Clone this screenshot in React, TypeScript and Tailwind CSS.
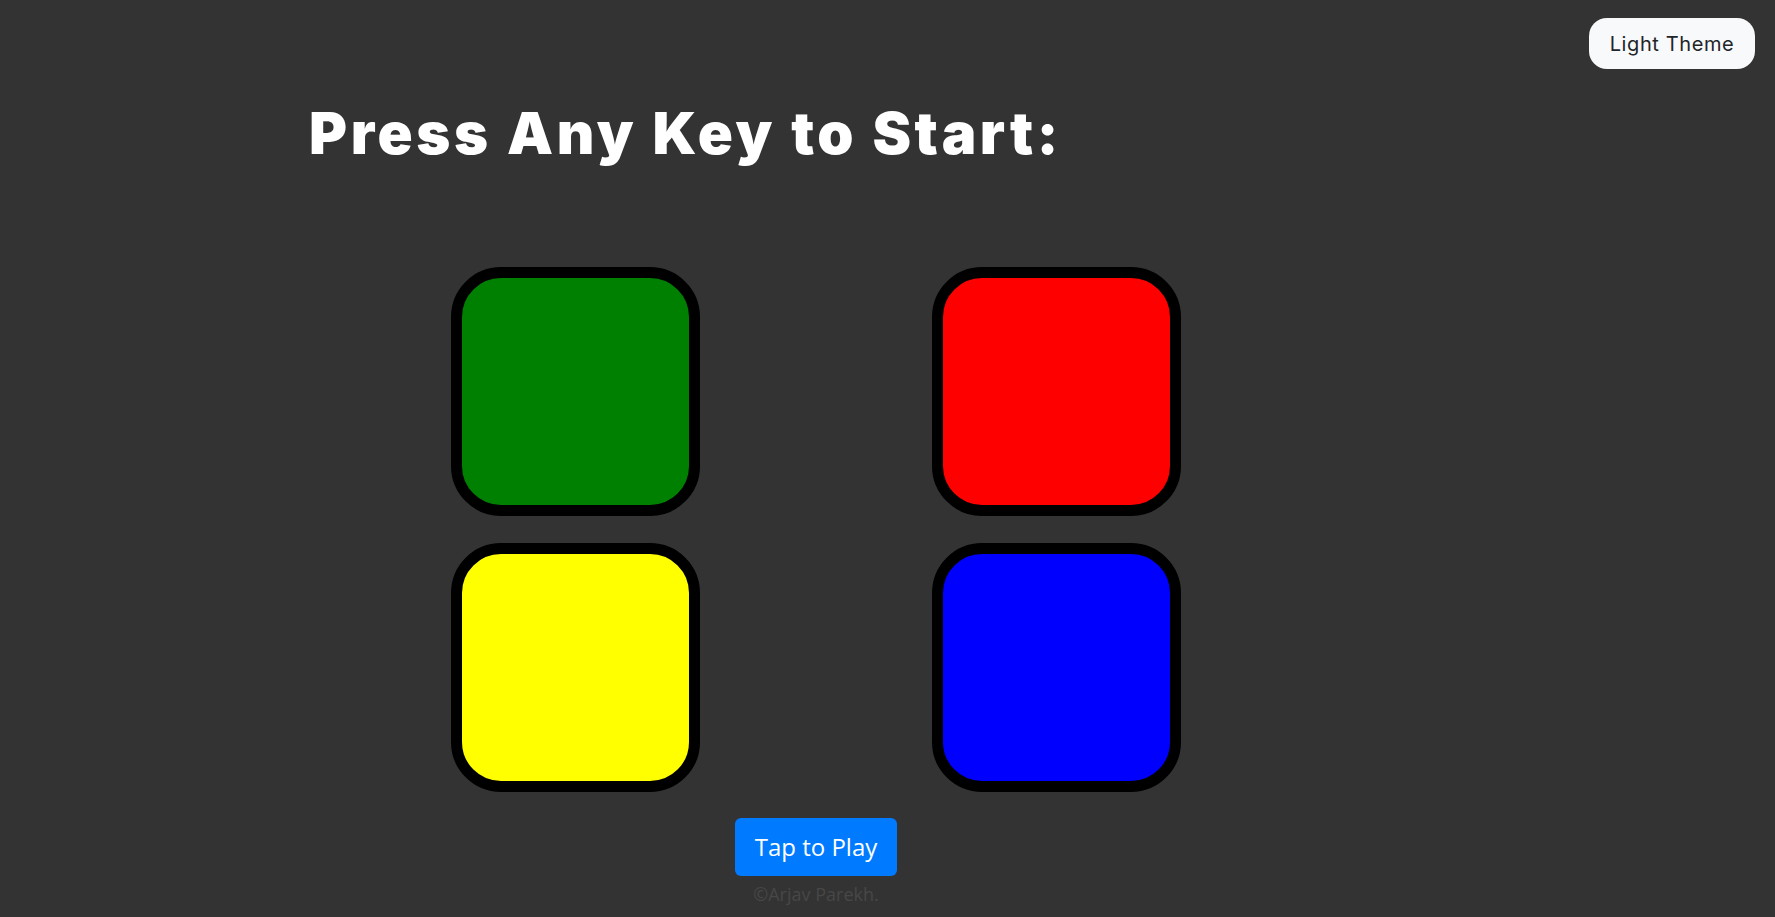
export default function App() {
  const pads = [
    { id: "green", color: "bg-[#008000]" },
    { id: "red", color: "bg-[#ff0000]" },
    { id: "yellow", color: "bg-[#ffff00]" },
    { id: "blue", color: "bg-[#0000ff]" },
  ];

  return (
    <div className="relative min-h-[917px] w-full bg-[#333333] overflow-hidden">
      {/* theme toggle */}
      <button className="absolute right-[20px] top-[18px] h-[51px] w-[166px] rounded-[18px] bg-[#f8f9fa] text-[20px] font-normal tracking-[0.6px] text-[#212529] [font-family:Inter,sans-serif]">
        Light Theme
      </button>

      <div className="flex flex-col items-start pl-[309px] pt-[104px]">
        <h1 className="text-[58px] leading-[58px] font-black tracking-[3.6px] text-white [font-family:Inter,sans-serif]">
          Press Any Key to Start:
        </h1>

        <div className="ml-[142px] mt-[105px] flex w-[730px] flex-col items-center">
          <div className="grid grid-cols-[249px_249px] gap-x-[232px] gap-y-[27px]">
            {pads.map((p) => (
              <div
                key={p.id}
                className={`h-[249px] w-[249px] rounded-[50px] border-[11px] border-black ${p.color}`}
              />
            ))}
          </div>

          <button className="mt-[26px] h-[58px] w-[162px] rounded-[6px] bg-[#007bff] text-[24px] text-white [font-family:'Open_Sans',sans-serif]">
            Tap to Play
          </button>
          <p className="mt-[6px] text-[18px] leading-[24px] text-[#474747] [font-family:'Open_Sans',sans-serif]">
            ©Arjav Parekh.
          </p>
        </div>
      </div>
    </div>
  );
}
